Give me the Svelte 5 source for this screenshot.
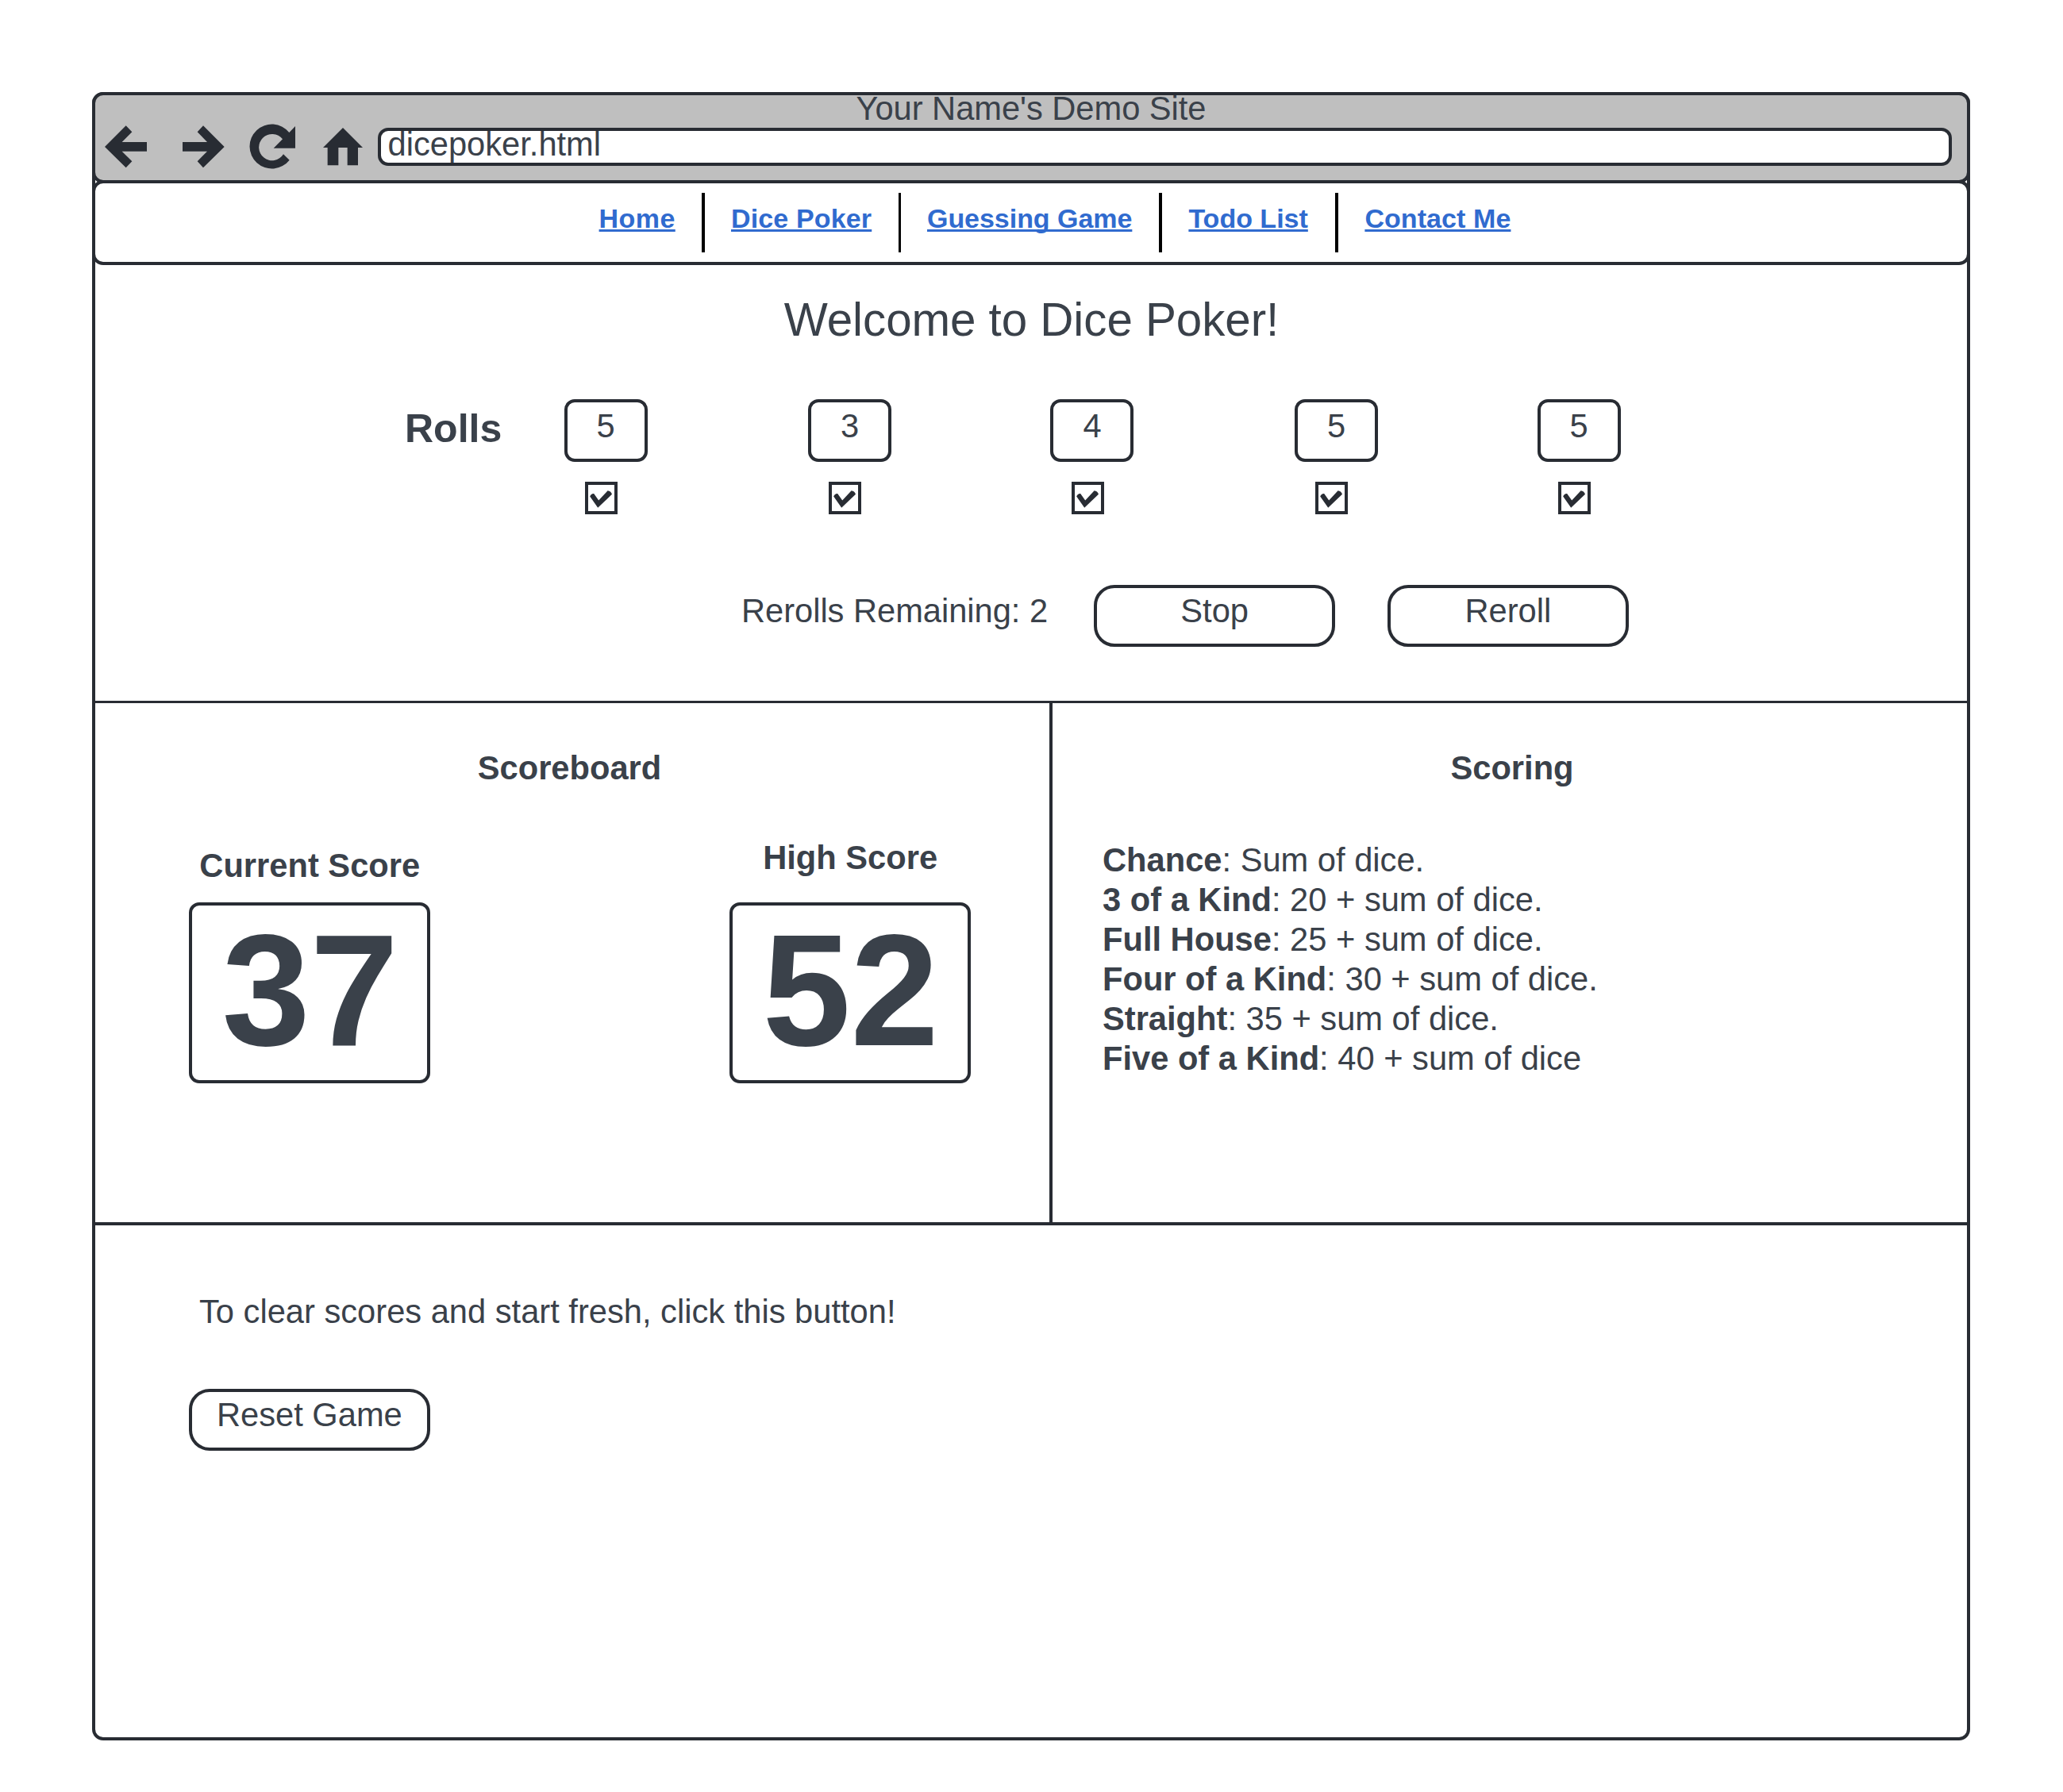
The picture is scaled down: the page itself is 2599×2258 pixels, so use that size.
<script>
  const links = [
    { label: 'Home', key: 'home' },
    { label: 'Dice Poker', key: 'dice' },
    { label: 'Guessing Game', key: 'guess' },
    { label: 'Todo List', key: 'todo' },
    { label: 'Contact Me', key: 'contact' }
  ];
  const dice = [5, 3, 4, 5, 5];
  const rules = [
    ['Chance', 'Sum of dice.'],
    ['3 of a Kind', '20 + sum of dice.'],
    ['Full House', '25 + sum of dice.'],
    ['Four of a Kind', '30 + sum of dice.'],
    ['Straight', '35 + sum of dice.'],
    ['Five of a Kind', '40 + sum of dice']
  ];
</script>

<div class="page">
  <div class="browser">
    <header class="chrome">
      <div class="title">Your Name's Demo Site</div>
      <div class="toolbar">
        <svg class="icon back" viewBox="66 30 159 180" aria-label="Back">
          <path d="M66 120 146 40 169 64 131 102H225V137H131L169 175 146 199Z" />
        </svg>
        <svg class="icon forward" viewBox="360 30 159 180" aria-label="Forward">
          <path d="M518 120 438 40 416 64 453 102H360V137H453L416 175 438 199Z" />
        </svg>
        <svg class="icon reload" viewBox="612 30 177 180" aria-label="Reload">
          <path d="M763 66 786 42V125H704L738 91A50 50 0 1 0 741 148L764 170A84 84 0 1 1 763 66Z" />
        </svg>
        <svg class="icon home" viewBox="892 30 150 180" aria-label="Home">
          <path d="M967 48 1042 123H1024V190H984V123H950V190H909V123H892Z" />
        </svg>
        <div class="address">dicepoker.html</div>
      </div>
    </header>

    <nav class="nav">
      {#each links as link, i}
        {#if i > 0}<span class="divider" class:thin={i === 2}></span>{/if}
        <a class="link {link.key}" href="#{link.key}">{link.label}</a>
      {/each}
    </nav>

    <section class="game">
      <h1>Welcome to Dice Poker!</h1>
      <div class="rolls">
        <h2>Rolls</h2>
        <div class="dice">
          {#each dice as value}
            <div class="die">
              <div class="face">{value}</div>
              <svg class="check" viewBox="0 0 41 41" role="checkbox" aria-checked="true" aria-label="Keep die">
                <rect x="2" y="2" width="37" height="37" />
                <path d="M6.2 18.6Q7.8 14.6 11.2 15L17.2 23.6 28.6 11.3Q32.6 11.6 34 15.8L16.2 32.8Z" />
              </svg>
            </div>
          {/each}
        </div>
      </div>
      <div class="controls">
        <span class="remaining">Rerolls Remaining: 2</span>
        <button>Stop</button>
        <button>Reroll</button>
      </div>
    </section>

    <section class="middle">
      <div class="board">
        <h3>Scoreboard</h3>
        <div class="scores">
          <div class="score current">
            <h4>Current Score</h4>
            <div class="number">37</div>
          </div>
          <div class="score high">
            <h4>High Score</h4>
            <div class="number">52</div>
          </div>
        </div>
      </div>
      <div class="scoring">
        <h3>Scoring</h3>
        <ul>
          {#each rules as [name, text]}
            <li><b>{name}</b>: {text}</li>
          {/each}
        </ul>
      </div>
    </section>

    <section class="reset">
      <p>To clear scores and start fresh, click this button!</p>
      <button>Reset Game</button>
    </section>
  </div>
</div>

<style>
  :global(body) {
    margin: 0;
    background: #fff;
  }
  .page {
    --line: #282c33;
    box-sizing: border-box;
    width: 2599px;
    height: 2258px;
    padding: 116px 117px 65px 116px;
    background: #fff;
    color: #3a414a;
    font-family: 'Liberation Sans', Arial, sans-serif;
    font-size: 41.67px;
    line-height: 51px;
    white-space: nowrap;
  }
  .page * {
    box-sizing: border-box;
  }
  h1, h2, h3, h4, p, ul {
    margin: 0;
    padding: 0;
  }
  .browser {
    display: flex;
    flex-direction: column;
    height: 2077px;
    border: 4px solid var(--line);
    border-radius: 14px;
  }

  .chrome {
    height: 115px;
    margin: -4px -4px 0;
    border: 4px solid var(--line);
    border-radius: 14px;
    background: #bfbfbf;
  }
  .title {
    height: 41px;
    line-height: 33px;
    text-align: center;
    letter-spacing: -0.04px;
  }
  .toolbar {
    display: flex;
    padding: 0 19px 0 12px;
  }
  .icon {
    flex: none;
    height: 60px;
    margin-top: -6px;
    fill: var(--line);
  }
  .back {
    width: 53px;
  }
  .forward {
    width: 53px;
    margin-left: 45px;
  }
  .reload {
    width: 59px;
    margin-left: 31px;
  }
  .home.icon {
    width: 50px;
    margin-left: 34.3px;
  }
  .address {
    flex: 1;
    height: 48px;
    margin-left: 18.7px;
    padding-left: 8.5px;
    border: 4px solid var(--line);
    border-radius: 13px;
    background: #fff;
    line-height: 33px;
  }

  .nav {
    display: flex;
    align-items: center;
    gap: 33px;
    height: 107px;
    margin: -4px -4px 0;
    padding-left: 634.6px;
    border: 4px solid var(--line);
    border-radius: 14px;
    background: #fff;
  }
  .divider {
    width: 4px;
    height: 75px;
    background: #000;
  }
  .divider.thin {
    width: 3px;
  }
  .link {
    margin-bottom: 11px;
    color: #306bcf;
    font-size: 34px;
    font-weight: bold;
    line-height: 38px;
    text-decoration: underline;
    text-decoration-thickness: 3px;
    text-underline-offset: 2px;
    text-decoration-skip-ink: none;
  }
  .link.home {
    width: 96.4px;
    letter-spacing: 0.42px;
  }
  .link.dice {
    width: 178px;
    letter-spacing: 0.15px;
  }
  .link.guess {
    width: 259.4px;
    letter-spacing: -0.04px;
  }
  .link.todo {
    width: 152px;
  }
  .link.contact {
    width: 185px;
    letter-spacing: 0.08px;
  }

  .game {
    height: 552px;
    padding-top: 34px;
    border-bottom: 3px solid var(--line);
  }
  h1 {
    padding-left: 1px;
    font-size: 58.33px;
    font-weight: normal;
    line-height: 70px;
    letter-spacing: -0.05px;
    text-align: center;
  }
  .rolls {
    display: flex;
    margin-top: 65px;
    padding-left: 390px;
  }
  h2 {
    width: 200.6px;
    padding-top: 9px;
    font-size: 50px;
    line-height: 56px;
  }
  .rolls .dice {
    display: grid;
    grid-template-columns: 307.4px 305.5px 307.6px 305.6px 106px;
  }
  .die {
    display: flex;
    flex-direction: column;
    width: 105px;
  }
  .face {
    height: 79px;
    border: 4px solid var(--line);
    border-radius: 13px;
    line-height: 59px;
    text-align: center;
  }
  .check {
    width: 41px;
    height: 41px;
    margin: 25px 0 0 26.4px;
  }
  .check rect {
    fill: none;
    stroke: var(--line);
    stroke-width: 4;
  }
  .check path {
    fill: var(--line);
  }
  .controls {
    display: flex;
    margin-top: 89px;
    padding-left: 814px;
  }
  .remaining {
    width: 444.3px;
    padding-top: 4px;
    line-height: 57px;
    letter-spacing: -0.03px;
  }
  button {
    display: block;
    width: 303.7px;
    height: 78px;
    padding: 0 0 13px;
    border: 4px solid var(--line);
    border-radius: 26px;
    background: #fff;
    color: inherit;
    font: inherit;
    line-height: 57px;
  }
  .controls button + button {
    margin-left: 66px;
  }

  .middle {
    display: flex;
    height: 658px;
    border-bottom: 4px solid var(--line);
  }
  h3, h4 {
    font-size: inherit;
    text-align: center;
  }
  .board {
    width: 1206px;
    padding-top: 56px;
    border-right: 4px solid var(--line);
  }
  .board h3 {
    padding-right: 7px;
  }
  .scores {
    display: flex;
    align-items: flex-end;
    gap: 377px;
    margin-top: 62px;
    padding-left: 118.3px;
  }
  .score {
    display: flex;
    flex-direction: column;
    width: 303.9px;
    gap: 31px;
  }
  .score.current {
    gap: 21px;
  }
  .number {
    height: 228px;
    padding-left: 1px;
    border: 4px solid var(--line);
    border-radius: 13px;
    font-size: 200px;
    font-weight: bold;
    line-height: 213px;
    text-align: center;
  }
  .scoring {
    flex: 1;
    padding-top: 56px;
  }
  .scoring h3 {
    padding-left: 6px;
  }
  ul {
    margin-top: 66px;
    padding-left: 63px;
    list-style: none;
    line-height: 50px;
  }

  .reset {
    padding: 83px 0 0 118px;
  }
  .reset p {
    padding-left: 13px;
  }
  .reset button {
    margin-top: 72px;
  }
</style>
